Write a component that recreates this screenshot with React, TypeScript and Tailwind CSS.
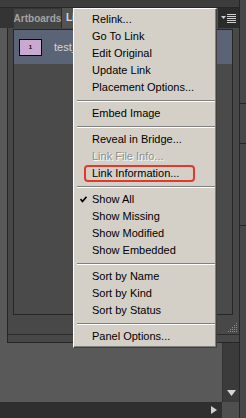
import React from 'react';

type MenuEntry =
    | { label: string; disabled?: boolean; checked?: boolean; highlight?: boolean }
    | 'sep';

const MENU: MenuEntry[] = [
    { label: 'Relink...' },
    { label: 'Go To Link' },
    { label: 'Edit Original' },
    { label: 'Update Link' },
    { label: 'Placement Options...' },
    'sep',
    { label: 'Embed Image' },
    'sep',
    { label: 'Reveal in Bridge...' },
    { label: 'Link File Info...', disabled: true },
    { label: 'Link Information...', highlight: true },
    'sep',
    { label: 'Show All', checked: true },
    { label: 'Show Missing' },
    { label: 'Show Modified' },
    { label: 'Show Embedded' },
    'sep',
    { label: 'Sort by Name' },
    { label: 'Sort by Kind' },
    { label: 'Sort by Status' },
    'sep',
    { label: 'Panel Options...' },
];

const PanelMenuIcon: React.FC = () => (
    <svg width="15" height="9" viewBox="0 0 15 9">
        <polygon points="0,2 5,2 2.5,5" fill="#cfcfcf" />
        <rect x="6" y="0" width="9" height="1" fill="#cfcfcf" />
        <rect x="6" y="2" width="9" height="1" fill="#cfcfcf" />
        <rect x="6" y="4" width="9" height="1" fill="#cfcfcf" />
        <rect x="6" y="6" width="9" height="1" fill="#cfcfcf" />
        <rect x="6" y="8" width="9" height="1" fill="#cfcfcf" />
    </svg>
);

const Grip: React.FC = () => {
    // little dotted resize triangle in the panel corner
    const dots: React.ReactNode[] = [];
    for (let row = 0; row < 5; row++) {
        for (let col = 4 - row; col < 5; col++) {
            dots.push(<rect key={`${row}-${col}`} x={col * 2} y={row * 2} width="1" height="1" fill="#8c8c8c" />);
        }
    }
    return (
        <svg width="10" height="10" viewBox="0 0 10 10">
            {dots}
        </svg>
    );
};

const MenuRow: React.FC<{ entry: Exclude<MenuEntry, 'sep'> }> = ({ entry }) => {
    if (entry.highlight) {
        return (
            <div className="flex h-[17px] items-center pl-[10px]">
                <span className="flex h-[17px] w-[111px] items-center rounded-[4px] border-2 border-[#e2392e] px-[6px] text-black">
                    {entry.label}
                </span>
            </div>
        );
    }
    return (
        <div className="relative flex h-[17px] items-center pl-[18px]">
            {entry.checked && (
                <svg className="absolute left-[6px] top-[5px]" width="7" height="7" viewBox="0 0 7 7">
                    <polyline points="0.5,3 2.5,5.5 6.5,0.8" fill="none" stroke="#000" strokeWidth="1.7" />
                </svg>
            )}
            <span className={entry.disabled ? 'text-[#8e8e8e] [text-shadow:1px_1px_0_#ffffff]' : 'text-black'}>
                {entry.label}
            </span>
        </div>
    );
};

const App: React.FC = () => {
    return (
        <div className="flex h-[418px] w-[246px] overflow-hidden bg-[#595959] font-['Liberation_Sans',Arial,sans-serif] text-[11px] leading-none">
            <div className="relative flex w-[240px] flex-col border-r border-[#262626]">
                {/* top strip */}
                <div className="h-[8px] border-b border-[#262626] bg-[#3d3d3d]" />

                {/* tabs */}
                <div className="flex h-[20px] bg-[#343434]">
                    <div className="w-[14px]" />
                    <div className="mt-[1px] flex w-[48px] items-center justify-center border-r border-[#2a2a2a] bg-[#454545] text-[10px] font-bold text-[#a3a3a3]">
                        Artboards
                    </div>
                    <div className="flex flex-1 items-center bg-[#535353] pl-[4px] text-[10px] font-bold text-[#dadada]">
                        Links
                    </div>
                    <div className="flex w-[21px] items-center justify-center bg-[#2b2b2b]">
                        <PanelMenuIcon />
                    </div>
                </div>

                {/* links panel */}
                <div className="flex h-[315px]">
                    <div className="w-[7px]" />
                    <div className="flex flex-1 flex-col border-b border-l border-[#262626] bg-[#484848]">
                        <div className="pl-[5px] pr-[6px] pt-[1px]">
                            <div className="h-[286px] border border-[#262626] bg-[#4a4a4a]">
                                <div className="flex h-[34px] items-center bg-[#5b6476] pl-[5px]">
                                    <div className="flex h-[17px] w-[23px] items-center justify-center border border-black bg-[#c9a9d2] text-[6px] font-bold text-black">
                                        1
                                    </div>
                                    <span className="ml-[12px] text-[#d6d6d6]">test_</span>
                                </div>
                            </div>
                        </div>
                        <div className="flex h-[20px] items-end justify-end border-b border-[#2c2c2c] pb-[1px] pr-[1px]">
                            <Grip />
                        </div>
                        <div className="h-[7px]" />
                    </div>
                </div>

                {/* document area */}
                <div className="flex flex-1 justify-end">
                    <div className="flex w-[17px] flex-col items-center justify-end border-l border-[#333] bg-[#3b3b3b] pb-[6px]">
                        <svg width="9" height="6" viewBox="0 0 9 6">
                            <polygon points="0,0 9,0 4.5,6" fill="#d6d6d6" />
                        </svg>
                    </div>
                </div>

                {/* bottom bar */}
                <div className="flex h-[16px]">
                    <div className="flex flex-1 items-center justify-end bg-[#2f2f2f] pr-[5px]">
                        <svg width="6" height="8" viewBox="0 0 6 8">
                            <polygon points="0,0 6,4 0,8" fill="#d0d0d0" />
                        </svg>
                    </div>
                    <div className="w-[17px] bg-[#4f4f4f]" />
                </div>

                {/* flyout menu */}
                <div className="absolute left-[73px] top-[8px] w-[144px] border border-b-[#404040] border-l-white border-r-[#404040] border-t-white bg-[#d4d0c8] py-[2px] shadow-[inset_-1px_-1px_0_#808080]">
                    {MENU.map((entry, i) =>
                        entry === 'sep' ? (
                            <div key={i} className="flex h-[9px] items-center">
                                <div className="ml-[3px] mr-[1px] h-[2px] flex-1 border-b border-t border-b-white border-t-[#808080]" />
                            </div>
                        ) : (
                            <MenuRow key={i} entry={entry} />
                        )
                    )}
                </div>
            </div>

            {/* collapsed dock strip */}
            <div className="flex flex-1 flex-col bg-[#474747]">
                <div className="h-[104px] border-b border-[#262626]" />
                <div className="h-[40px] border-b border-[#262626]" />
                <div className="h-[82px] border-b border-[#262626]" />
                <div className="flex-1" />
            </div>
        </div>
    );
};

export default App;
